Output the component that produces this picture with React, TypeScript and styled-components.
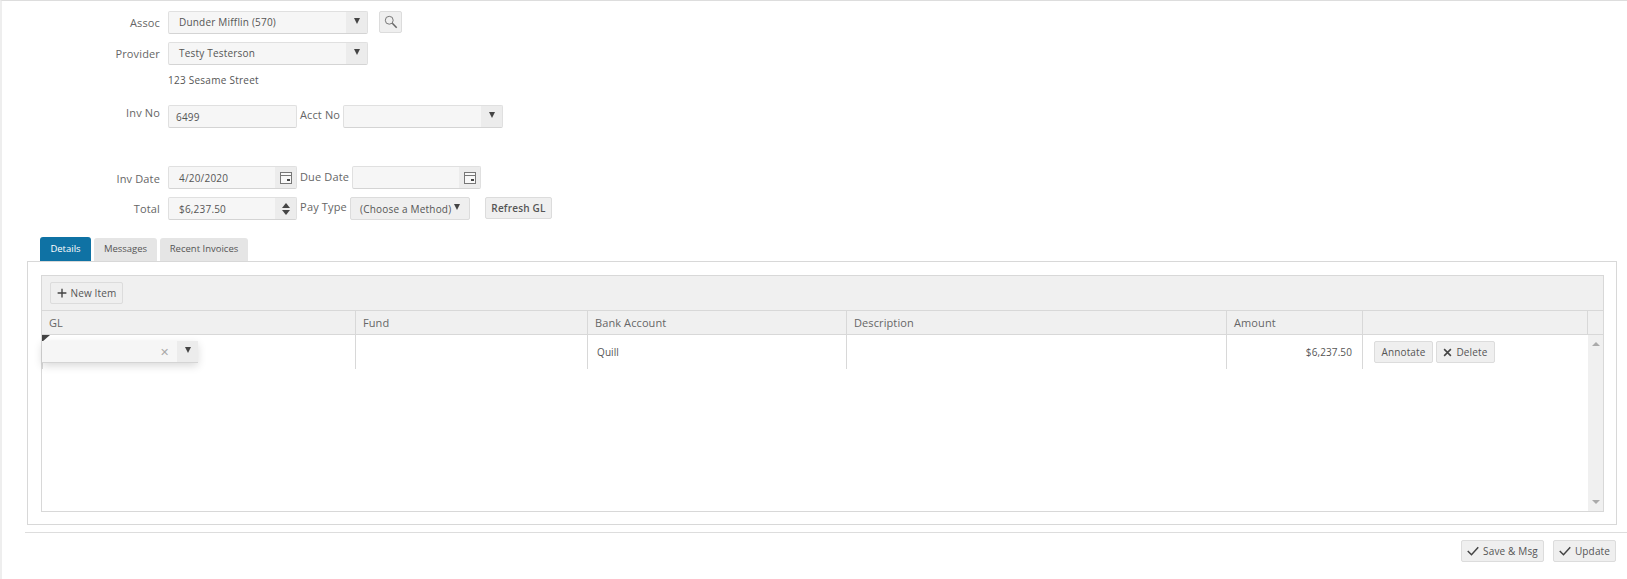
import React, { ReactElement, ReactNode } from 'react';
import styled, { createGlobalStyle } from 'styled-components';

const GlobalStyle = createGlobalStyle`
	html, body {
		margin: 0;
		padding: 0;
		background: #fff;
		font-family: 'Open Sans', 'Noto Sans', sans-serif;
		color: #555;
	}
`;

const Page = styled.div`
	position: relative;
	width: 1627px;
	height: 579px;
	box-sizing: border-box;
	overflow: hidden;
	border-top: 1px solid #ddd;
	border-left: 2px solid #eee;
`;

const CursorMark = styled.div`
	position: absolute;
	left: -2px;
	top: 399px;
	width: 1px;
	height: 16px;
	background: #444;
`;

const Form = styled.div`
	height: 236px;
	padding-top: 10px;
	box-sizing: border-box;
`;

const Row = styled.div<{ $mt?: number }>`
	display: flex;
	align-items: flex-start;
	margin-top: ${(p) => p.$mt ?? 0}px;
`;

const Label = styled.label<{ $dy?: number }>`
	width: 166px;
	padding-right: 8px;
	box-sizing: border-box;
	text-align: right;
	font-size: 11px;
	letter-spacing: 0.15px;
	line-height: 16px;
	margin-top: ${(p) => p.$dy ?? 4}px;
	color: #666;
`;

const InlineLabel = styled.label<{ $w: number; $dy?: number }>`
	width: ${(p) => p.$w}px;
	text-align: center;
	font-size: 11px;
	letter-spacing: 0.15px;
	line-height: 16px;
	margin-top: ${(p) => p.$dy ?? 3}px;
	color: #666;
`;

const Field = styled.div<{ $w: number; $h?: number }>`
	display: flex;
	width: ${(p) => p.$w}px;
	height: ${(p) => p.$h ?? 23}px;
	box-sizing: border-box;
	border: 1px solid #e0e0e0;
	border-bottom-color: #d4d4d4;
	border-radius: 2px;
	background: #f6f6f6;
`;

const FieldText = styled.span<{ $pl?: number; $dy?: number }>`
	flex: 1;
	padding-left: ${(p) => p.$pl ?? 10}px;
	padding-top: ${(p) => p.$dy ?? 0}px;
	font-size: 10px;
	letter-spacing: 0.2px;
	line-height: 21px;
	color: #555;
	white-space: nowrap;
`;

const FieldButton = styled.span<{ $w?: number }>`
	display: flex;
	align-items: center;
	justify-content: center;
	width: ${(p) => p.$w ?? 21}px;
	background: #ececec;
`;

const Arrow = styled.span`
	width: 0;
	height: 0;
	margin-top: -3px;
	border-left: 3.5px solid transparent;
	border-right: 3.5px solid transparent;
	border-top: 6px solid #444;
`;

const AddressLine = styled.div`
	margin: 8px 0 0 166px;
	font-size: 10px;
	letter-spacing: 0.25px;
	line-height: 14px;
	color: #555;
`;

const Button = styled.button<{ $w: number; $h?: number; $bold?: boolean; $ml?: number }>`
	display: inline-flex;
	align-items: center;
	justify-content: center;
	gap: 4px;
	width: ${(p) => p.$w}px;
	height: ${(p) => p.$h ?? 22}px;
	margin-left: ${(p) => p.$ml ?? 0}px;
	padding: 0;
	box-sizing: border-box;
	border: 1px solid #dcdcdc;
	border-radius: 2px;
	background: #efefef;
	font-family: inherit;
	font-size: 10px;
	letter-spacing: ${(p) => (p.$bold ? 0.2 : 0.15)}px;
	font-weight: ${(p) => (p.$bold ? 600 : 400)};
	color: #555;
`;

const SelectBox = styled(Button)`
	justify-content: flex-start;
	padding-left: 9px;
	margin-left: 0;
	gap: 3px;
	height: 23px;
	letter-spacing: 0.2px;
`;

const Tabs = styled.div`
	display: flex;
	align-items: flex-end;
	gap: 3px;
	height: 24px;
	margin-left: 38px;
`;

const Tab = styled.div<{ $active?: boolean; $w: number }>`
	width: ${(p) => p.$w}px;
	height: ${(p) => (p.$active ? 24 : 23)}px;
	box-sizing: border-box;
	border-radius: 3px 3px 0 0;
	background: ${(p) => (p.$active ? '#0f72a4' : '#e5e5e5')};
	color: ${(p) => (p.$active ? '#fff' : '#555')};
	text-align: center;
	font-size: 9.5px;
	line-height: ${(p) => (p.$active ? 24 : 22)}px;
`;

const Panel = styled.section`
	margin-left: 25px;
	width: 1590px;
	height: 264px;
	box-sizing: border-box;
	border: 1px solid #d8d8d8;
	padding: 13px 12px 12px 13px;
`;

const Grid = styled.div`
	display: flex;
	flex-direction: column;
	height: 237px;
	box-sizing: border-box;
	border: 1px solid #d8d8d8;
`;

const Toolbar = styled.div`
	display: flex;
	align-items: center;
	height: 35px;
	padding-left: 8px;
	box-sizing: border-box;
	background: #f0f0f0;
	border-bottom: 1px solid #d8d8d8;
`;

const columns = '314px 232px 259px 380px 136px 225px 1fr';

const HeaderRow = styled.div`
	display: grid;
	grid-template-columns: ${columns};
	height: 24px;
	box-sizing: border-box;
	background: #f0f0f0;
	border-bottom: 1px solid #d8d8d8;
`;

const HeaderCell = styled.div`
	padding-left: 7px;
	border-right: 1px solid #d8d8d8;
	font-size: 11px;
	line-height: 23px;
	letter-spacing: 0.1px;
	color: #666;
	&:last-child {
		border-right: 0;
	}
`;

const GridBody = styled.div`
	position: relative;
	flex: 1;
	display: flex;
	justify-content: space-between;
`;

const DataRow = styled.div`
	display: grid;
	grid-template-columns: 314px 232px 259px 380px 136px 225px;
	height: 34px;
	font-size: 10px;
	letter-spacing: 0.1px;
	color: #555;
`;

const Cell = styled.div<{ $right?: boolean }>`
	display: flex;
	align-items: center;
	justify-content: ${(p) => (p.$right ? 'flex-end' : 'flex-start')};
	padding: 0 ${(p) => (p.$right ? 10 : 0)}px 0 ${(p) => (p.$right ? 0 : 9)}px;
	border-right: 1px solid #d8d8d8;
	&:first-child {
		border-left: 1px solid #d8d8d8;
	}
	&:last-child {
		border-right: 0;
		gap: 3px;
		padding-left: 11px;
	}
`;

const DirtyMark = styled.span`
	position: absolute;
	left: 0;
	top: 0;
	width: 0;
	height: 0;
	border-top: 7px solid #444;
	border-right: 8px solid transparent;
`;

const CellEditor = styled.div`
	position: absolute;
	left: 0;
	top: 6px;
	display: flex;
	width: 156px;
	height: 22px;
	box-sizing: border-box;
	background: #f6f6f6;
	border-bottom: 1px solid #d4d4d4;
	box-shadow: 0 3px 8px rgba(0, 0, 0, 0.15);
`;

const ClearIcon = styled.span`
	margin: 0 8px 0 auto;
	font-size: 11px;
	line-height: 22px;
	color: #aaa;
`;

const Scrollbar = styled.div`
	display: flex;
	flex-direction: column;
	justify-content: space-between;
	align-items: center;
	width: 17px;
	padding: 7px 0;
	box-sizing: border-box;
	background: #f0f0f0;
`;

const ScrollUp = styled.span`
	border-left: 4px solid transparent;
	border-right: 4px solid transparent;
	border-bottom: 4px solid #aaa;
`;

const ScrollDown = styled.span`
	border-left: 4px solid transparent;
	border-right: 4px solid transparent;
	border-top: 4px solid #aaa;
`;

const Footer = styled.div`
	display: flex;
	justify-content: flex-end;
	gap: 9px;
	margin: 7px 0 0 23px;
	padding: 7px 11px 0 0;
	border-top: 1px solid #ddd;
`;

const Spinner = styled.span`
	display: flex;
	flex-direction: column;
	gap: 2px;
`;

const SpinUp = styled.span`
	border-left: 4px solid transparent;
	border-right: 4px solid transparent;
	border-bottom: 5px solid #444;
`;

const SpinDown = styled.span`
	border-left: 4px solid transparent;
	border-right: 4px solid transparent;
	border-top: 5px solid #444;
`;

const Icon = ({ children, size = 13, color = '#444' }: { children: ReactNode; size?: number; color?: string }): ReactElement => (
	<svg width={size} height={size} viewBox="0 0 16 16" fill="none" stroke={color}>
		{children}
	</svg>
);

const Calendar = (): ReactElement => (
	<svg width="12" height="12" viewBox="0 0 12 12">
		<rect x="0.5" y="0.5" width="11" height="11" fill="#f8f8f8" stroke="#777" />
		<path d="M0.5 3.5 H11.5" stroke="#777" />
		<rect x="7" y="7" width="3" height="2" fill="#444" />
	</svg>
);

const Search = (): ReactElement => (
	<Icon size={14} color="#666">
		<circle cx="6" cy="6" r="4.5" strokeWidth="1" />
		<path d="M9.5 9.5 L14.5 14.5" strokeWidth="1.8" />
	</Icon>
);

const Check = (): ReactElement => (
	<Icon size={12}>
		<path d="M1 8 L6 13 L15 3" strokeWidth="2" />
	</Icon>
);

const Plus = (): ReactElement => (
	<Icon size={10}>
		<path d="M8 1 V15 M1 8 H15" strokeWidth="2.2" />
	</Icon>
);

const Cross = (): ReactElement => (
	<Icon size={9}>
		<path d="M2 2 L14 14 M14 2 L2 14" strokeWidth="2.8" />
	</Icon>
);

export default function App(): ReactElement {
	return (
		<Page>
			<GlobalStyle />
			<CursorMark />
			<Form>
				<Row>
					<Label>Assoc</Label>
					<Field $w={200}>
						<FieldText>Dunder Mifflin (570)</FieldText>
						<FieldButton>
							<Arrow />
						</FieldButton>
					</Field>
					<Button $w={23} $ml={11}>
						<Search />
					</Button>
				</Row>
				<Row $mt={8}>
					<Label>Provider</Label>
					<Field $w={200}>
						<FieldText>Testy Testerson</FieldText>
						<FieldButton>
							<Arrow />
						</FieldButton>
					</Field>
				</Row>
				<AddressLine>123 Sesame Street</AddressLine>
				<Row $mt={18}>
					<Label $dy={0}>Inv No</Label>
					<Field $w={129}>
						<FieldText $pl={7} $dy={1}>6499</FieldText>
					</Field>
					<InlineLabel $w={46} $dy={2}>Acct No</InlineLabel>
					<Field $w={160}>
						<FieldText />
						<FieldButton>
							<Arrow />
						</FieldButton>
					</Field>
				</Row>
				<Row $mt={38}>
					<Label $dy={5}>Inv Date</Label>
					<Field $w={129}>
						<FieldText $dy={1}>4/20/2020</FieldText>
						<FieldButton>
							<Calendar />
						</FieldButton>
					</Field>
					<InlineLabel $w={55}>Due Date</InlineLabel>
					<Field $w={129}>
						<FieldText />
						<FieldButton>
							<Calendar />
						</FieldButton>
					</Field>
				</Row>
				<Row $mt={8}>
					<Label>Total</Label>
					<Field $w={129}>
						<FieldText $dy={1}>$6,237.50</FieldText>
						<FieldButton>
							<Spinner>
								<SpinUp />
								<SpinDown />
							</Spinner>
						</FieldButton>
					</Field>
					<InlineLabel $w={53} $dy={2}>Pay Type</InlineLabel>
					<SelectBox $w={120}>
						(Choose a Method)
						<Arrow />
					</SelectBox>
					<Button $w={67} $ml={15} $bold>
						Refresh GL
					</Button>
				</Row>
			</Form>
			<Tabs>
				<Tab $active $w={51}>Details</Tab>
				<Tab $w={63}>Messages</Tab>
				<Tab $w={88}>Recent Invoices</Tab>
			</Tabs>
			<Panel>
				<Grid>
					<Toolbar>
						<Button $w={73}>
							<Plus />
							New Item
						</Button>
					</Toolbar>
					<HeaderRow>
						<HeaderCell>GL</HeaderCell>
						<HeaderCell>Fund</HeaderCell>
						<HeaderCell>Bank Account</HeaderCell>
						<HeaderCell>Description</HeaderCell>
						<HeaderCell>Amount</HeaderCell>
						<HeaderCell />
						<HeaderCell />
					</HeaderRow>
					<GridBody>
						<DataRow>
							<Cell />
							<Cell />
							<Cell>Quill</Cell>
							<Cell />
							<Cell $right>$6,237.50</Cell>
							<Cell>
								<Button $w={59}>Annotate</Button>
								<Button $w={59}>
									<Cross />
									Delete
								</Button>
							</Cell>
						</DataRow>
						<Scrollbar>
							<ScrollUp />
							<ScrollDown />
						</Scrollbar>
						<DirtyMark />
						<CellEditor>
							<FieldText />
							<ClearIcon>✕</ClearIcon>
							<FieldButton>
								<Arrow />
							</FieldButton>
						</CellEditor>
					</GridBody>
				</Grid>
			</Panel>
			<Footer>
				<Button $w={83}>
					<Check />
					Save &amp; Msg
				</Button>
				<Button $w={63}>
					<Check />
					Update
				</Button>
			</Footer>
		</Page>
	);
}
